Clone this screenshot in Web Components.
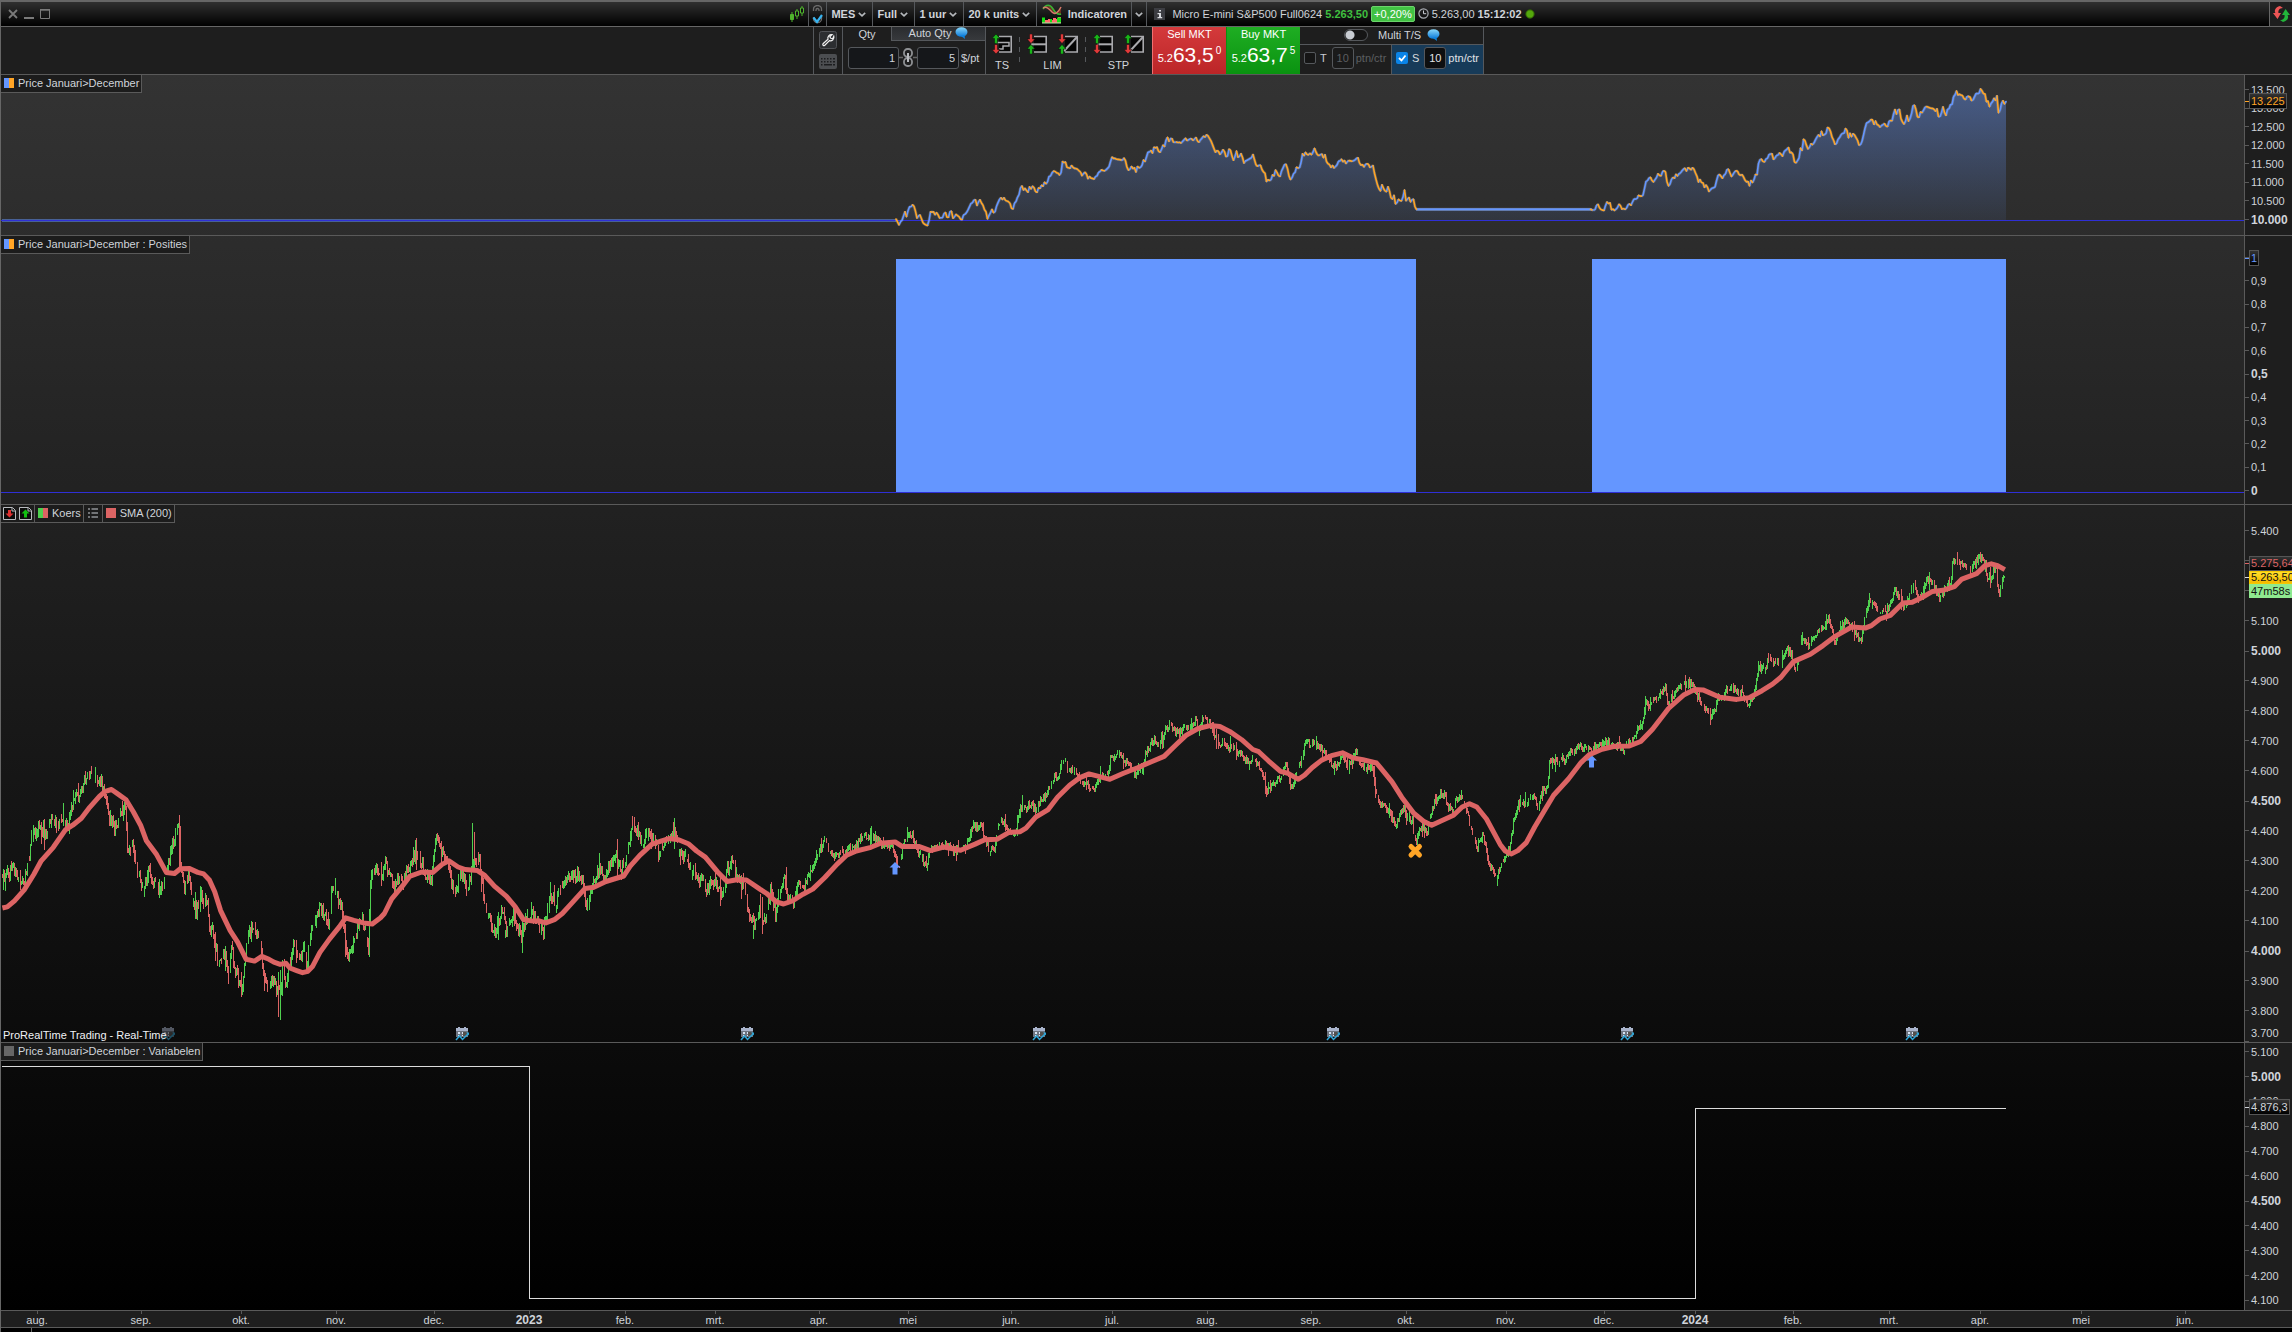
<!DOCTYPE html>
<html lang="nl">
<head>
<meta charset="utf-8">
<title>Micro E-mini S&amp;P500 Full0624</title>
<style>
html,body{height:100%;margin:0;background:#000}
body{font:11px/14px "Liberation Sans",Arial,sans-serif;color:#d0d4da}
</style>
</head>
<body>
<trading-window></trading-window>
<script>
const BASE = `*{box-sizing:border-box}svg{display:block;flex:none}button,input,select{font:inherit;color:inherit;margin:0;padding:0;border:0;background:none;border-radius:0;outline:0}`;
function define(name, render, ready){
  customElements.define(name, class extends HTMLElement{
    connectedCallback(){
      if(this.shadowRoot) return;
      const root = this.attachShadow({mode:'open'});
      root.innerHTML = '<style>'+BASE+'</style>' + render(this);
      if(ready) ready(root, this);
    }
  });
}

/* ---------- icons ---------- */
const up = (x,y,c)=>`<path d="M${x+4} ${y}l4 4.5h-2.5v5h-3v-5h-2.5z" fill="${c}" stroke="#0b0b0b" stroke-width=".5"/>`;
const down = (x,y,c)=>`<path d="M${x+4} ${y+9.5}l4-4.5h-2.5v-5h-3v5h-2.5z" fill="${c}" stroke="#0b0b0b" stroke-width=".5"/>`;
const G='#19b519', R='#e23a3a';
const frame='<path d="M7 2.5h12.2v15.500h-12.2" fill="#050505" stroke="#a9a9ad" stroke-width="1.6"/>';
const ICONS = {
  close:[10,10,'<path d="M1 1l8 8M9 1l-8 8" stroke="#7a7a7a" stroke-width="1.8"/>'],
  min:[10,10,'<path d="M0 9h10" stroke="#7a7a7a" stroke-width="2"/>'],
  max:[10,10,'<path d="M.5 1h9v8.500h-9z" fill="none" stroke="#7a7a7a" stroke-width="1"/><path d="M0 .7h10" stroke="#7a7a7a" stroke-width="1.4"/>'],
  candles:[14,16,'<g stroke="#4fb52c" stroke-width="1"><path d="M2 6v10M7 3v10M12 0v10"/><path d="M.5 8.500h3v5h-3z" fill="#4fb52c"/><path d="M5.500 5h3v5h-3zM10.500 2h3v5h-3z" fill="#111"/></g>'],
  linkcheck:[11,19,'<path d="M1.500 6V4a4 3.500 0 0 1 8 0v2M4 6V5a1.500 1.500 0 0 1 3 0v1M1.500 12v2a4 3.500 0 0 0 8 0v-2" fill="none" stroke="#6b6b6b" stroke-width="1.3"/><path d="M1.500 12.500l3.500 4.500 5-7" fill="none" stroke="#38b4f0" stroke-width="2.200"/>'],
  chev:[8,5,'<path d="M.8 .8l3.200 3 3.200-3" fill="none" stroke="#b5b8bc" stroke-width="1.600"/>'],
  indi:[20,20,'<path d="M1 6C5-1 9 0 12 5S17 12 19 10L19 3C15 10 13 10 9 6S4 2 1 6z" fill="#6d3020"/><path d="M1 5C4 0 8 0 11 5s5 6 8 5" fill="none" stroke="#35b535" stroke-width="1.500"/><path d="M1 4c4-2 6 1 9 4s6 1 9-5" fill="none" stroke="#d87a6a" stroke-width="1.500"/><path d="M0 14h3v2h3v-1h2v1h3v-2h3v1h2v-2h3v6H0z" fill="#ff6d6d"/><path d="M0 13.500h3v5H0zM8 15h2v3.500H8zM15 13.500h4v5h-4z" fill="#16e016"/><path d="M0 19h19" stroke="#9ff09f"/>'],
  info:[11,12,'<path d="M0 0h11v12H0z" fill="#3c3d42"/><path d="M5 2h2v1.600H5zM3.500 5H7v4h1.200v1.200H3.500V9H5V6.200H3.500z" fill="#d8dade"/>'],
  clock:[11,11,'<circle cx="5.500" cy="5.500" r="4.600" fill="none" stroke="#a9acb1" stroke-width="1.200"/><path d="M5.500 2.500v3.200H8.200" fill="none" stroke="#c8ccd2" stroke-width="1"/>'],
  dot:[10,10,'<circle cx="5" cy="5" r="4.200" fill="#55a80c" stroke="#2c5a06"/>'],
  swap:[19,18,'<path d="M8 1C3 2 2 6 3.500 8H1l4.500 6L9 8H6.500C6 6 7 3 11 3z" fill="#ee5555"/><path d="M11 17c5-1 6-5 4.500-7H18l-4.500-6L10 10h2.500c.5 2-.5 5-4.500 5z" fill="#22b43a"/>'],
  wrench:[18,18,'<rect x=".5" y=".5" width="17" height="17" rx="2" fill="#2c2e31" stroke="#515357"/><path d="M4 12.800l5-4.600A3.600 3.600 0 0 1 13 3.600L10.800 5.800l1 1.500 2 .2 1-2.200a3.600 3.600 0 0 1-4.400 4.400L5.600 14.500a1.200 1.200 0 0 1-1.600-1.700z" fill="none" stroke="#f2f2f2" stroke-width="1.200"/>'],
  keyb:[18,15,'<rect width="18" height="15" rx="2" fill="#4c4e51"/><path d="M2 4h1.500v1.500H2zM5 4h1.500v1.500H5zM8 4h1.500v1.500H8zM11 4h1.500v1.500H11zM14 4h2v1.500h-2zM2 7h1.500v1.500H2zM5 7h1.500v1.500H5zM8 7h1.500v1.500H8zM11 7h1.500v1.500H11zM14 7h2v1.500h-2zM2 10h1.500v1.500H2zM5 10h8v1.500H5zM14 10h2v1.500h-2z" fill="#1c1d1f"/>'],
  bubble:[13,12,'<defs><linearGradient id="b" x2="0" y2="1"><stop offset="0" stop-color="#8ad8fa"/><stop offset="1" stop-color="#0878d8"/></linearGradient></defs><ellipse cx="6.500" cy="5" rx="6" ry="4.800" fill="url(#b)"/><path d="M6 9l4 3-.5-4z" fill="#0c82dc"/>'],
  chain:[18,19,'<path d="M0 9.500h4M14 9.500h4" stroke="#666" stroke-width="1.500"/><g fill="none" stroke="#8e9093" stroke-width="1.800"><rect x="5" y="1" width="8" height="8" rx="3.500"/><rect x="5" y="10" width="8" height="8" rx="3.500"/></g><path d="M9 5v9" stroke="#b8babd" stroke-width="2"/>'],
  ts:[20,20,frame+'<path d="M4 8.500h13v3.500h-6v3H7" fill="none" stroke="#a9a9ad" stroke-width="1.500"/>'+up(0,0,G)+down(0,10.5,R)],
  lim1:[20,20,frame+'<path d="M4 10.300h15" stroke="#a9a9ad" stroke-width="2"/>'+down(0,0,R)+up(0,10.5,G)],
  lim2:[20,20,frame+'<path d="M6 17L19 3" stroke="#a9a9ad" stroke-width="2"/>'+down(0,0,R)+up(0,10.5,G)],
  stp1:[20,20,frame+'<path d="M4 10.300h15" stroke="#a9a9ad" stroke-width="2"/>'+up(0,0,G)+down(0,10.5,R)],
  stp2:[20,20,frame+'<path d="M6 17L19 3" stroke="#a9a9ad" stroke-width="2"/>'+up(0,0,G)+down(0,10.5,R)],
  sell:[13,13,'<path d="M.5.5h9l3 3v9H.5z" fill="#0c0c0c" stroke="#b9bcc0"/><path d="M9 1v3h3" fill="none" stroke="#b9bcc0"/><path d="M6.500 10.500l4-4H8V3H5v3.500H2.500z" fill="#e03030"/>'],
  buy:[13,13,'<path d="M.5.5h9l3 3v9H.5z" fill="#0c0c0c" stroke="#b9bcc0"/><path d="M9 1v3h3" fill="none" stroke="#b9bcc0"/><path d="M6.500 2.500l4 4H8v4H5v-4H2.500z" fill="#12c012"/>'],
  list:[10,10,'<path d="M0 1h2M0 5h2M0 9h2M3.500 1H10M3.500 5H10M3.500 9H10" stroke="#c8ccd2" stroke-width="1.200"/>']
};
const icon = n => { const [w,h,b]=ICONS[n]; return `<svg width="${w}" height="${h}" viewBox="0 0 ${w} ${h}" aria-hidden="true">${b}</svg>`; };

/* ---------- title bar ---------- */
define('menu-select', el=>`<style>
:host{display:block;border-right:1px solid #55585c;height:24px}
label{display:flex;align-items:center;height:100%;padding:0 6px 0 4px}
select{appearance:none;font-weight:bold;flex:1;height:20px;width:100%;min-width:0}
option{background:#222}
</style><label><select aria-label="${el.getAttribute('label')}"><option>${el.textContent}</option></select>${icon('chev')}</label>`);

define('title-bar', ()=>`<style>
:host{display:grid;grid-template-columns:1fr auto 1fr;height:27px;border-top:2px solid #666;border-bottom:1px solid #666;background:linear-gradient(#303030,#000)}
.win{display:flex;align-items:center;gap:6px;padding-left:7px}
.mid{display:flex;align-items:center;margin-left:28px}
.mid>button{height:24px;display:flex;align-items:center;justify-content:center;border-right:1px solid #55585c}
.ind{gap:6px;font-weight:bold;width:95px}
.info{display:flex;align-items:center;gap:3px;height:24px;padding:0 0 1px 7px;white-space:nowrap}
.info svg:first-child{margin-right:4px}
.g{color:#3fbf3f;font-weight:bold}
.b{background:#41c143;color:#fff;padding:0 2px;border-radius:2px;border:1px solid #6bd56b}
.end{justify-self:end;display:flex;align-items:center;border-left:1px solid #666;background:#1e1e1e;padding:0 1px 0 2px;height:24px}
</style>
<div class="win"><button aria-label="Sluiten">${icon('close')}</button><button aria-label="Minimaliseren">${icon('min')}</button><button aria-label="Maximaliseren">${icon('max')}</button></div>
<div class="mid">
<button style="width:23px" aria-label="Grafiektype">${icon('candles')}</button>
<button style="width:18px" aria-label="Koppelen">${icon('linkcheck')}</button>
<menu-select style="width:46px" label="Symbool">MES</menu-select>
<menu-select style="width:42px" label="Contract">Full</menu-select>
<menu-select style="width:49px" label="Tijdvenster">1 uur</menu-select>
<menu-select style="width:73px" label="Historie">20 k units</menu-select>
<button class="ind">${icon('indi')}Indicatoren</button>
<button style="width:15px" aria-label="Meer indicatoren">${icon('chev')}</button>
<div class="info">${icon('info')}<span>Micro E-mini S&amp;P500 Full0624</span><span class="g">5.263,50</span><span class="b">+0,20%</span>${icon('clock')}<span>5.263,00</span><b>15:12:02</b>${icon('dot')}</div>
</div>
<button class="end" aria-label="Vernieuwen">${icon('swap')}</button>`);

/* ---------- order bar ---------- */
define('price-button', el=>{
  const [label,a,b,c]=el.textContent.split('|');
  return `<style>
:host{display:block;width:74px}
button{display:flex;flex-direction:column;align-items:center;width:100%;height:47px;color:#fff;background:var(--fill);border-left:1px solid var(--edge)}
.p{display:flex;align-items:baseline;line-height:28px;height:30px}
.l{font-size:21px}sup{font-size:10px;line-height:10px;align-self:flex-start;margin:5px 0 0 2px}
</style><button><span>${label}</span><span class="p"><span>${a}</span><span class="l">${b}</span><sup>${c}</sup></span></button>`;});

define('tool-group', el=>`<style>
:host{display:flex;flex-direction:column;align-items:center;gap:4px;padding-top:7px;flex:none}
div{display:flex;gap:11px}
</style><div>${el.getAttribute('icons').split(' ').map(i=>`<button aria-label="${i}">${icon(i)}</button>`).join('')}</div><slot></slot>`);

define('stop-field', el=>{
  const on=el.hasAttribute('on');
  return `<style>
:host{display:flex;align-items:center;flex:1 1 0;min-width:0;gap:2px;padding:0 2px 3px 4px;height:29px;color:${on?'#d8dade':'#c8ccd2'};background:${on?'#173b59':'none'}}
label{display:flex;align-items:center;gap:4px}
.c{appearance:none;width:12px;height:12px;border:1px solid #55585c;border-radius:2px;background:#151515}
.c:checked{border:0;background:#0a84e8}
.w{display:grid}.w>*{grid-area:1/1}.w svg{pointer-events:none}
.n{width:22px;height:22px;border:1px solid #55585c;border-radius:3px;background:${on?'#0e0f10':'#1a1a1a'};text-align:center;margin-left:3px}
.n,.u{color:${on?'#e2e4e8':'#5c5e61'}}
</style><label><span class="w"><input class="c" type="checkbox" ${on?'checked':''}>${on?'<svg width="12" height="12"><path d="M3 6l2.500 2.500L9.500 3.500" fill="none" stroke="#fff" stroke-width="1.800"/></svg>':''}</span>${el.textContent}</label><input class="n" value="10" aria-label="${el.textContent} punten" ${on?'':'disabled'}><span class="u">ptn/ctr</span>`;});

define('order-bar', ()=>`<style>
:host{display:flex;justify-content:center;height:48px;background:#1e1e1e;border-bottom:1px solid #5a5a5a;padding-left:4px}
.side{display:flex;flex-direction:column;align-items:center;gap:5px;padding-top:4px;width:30px;border:1px solid #55585c;border-width:0 1px}
.qty{width:143px;border-right:1px solid #55585c}
.tabs{display:flex;height:14px}
.tabs button{display:flex;align-items:center;justify-content:center;gap:4px;height:14px;line-height:12px;padding-bottom:1px}
.tabs button:first-child{width:48px}
.tabs button:last-child{flex:1;background:linear-gradient(#2a2c2f,#37393c);border:1px solid #55585c;border-top:0;border-right:0}
.row{display:flex;align-items:center;padding:1px 0 0 5px;height:32px}
.row input{height:22px;border:1px solid #55585c;border-radius:3px;background:#15171a;text-align:right;padding-right:3px;min-width:0;flex:none}
.row span{margin-left:2px}
.tools{display:flex;width:166px;gap:7px;padding-left:6px}
.tools i{width:1px;margin:10px 0 12px;background:repeating-linear-gradient(#55585c 0 5px,transparent 5px 10px)}
.multi{width:184px;border-right:1px solid #55585c}
.top{display:flex;align-items:center;height:18px;border-bottom:1px solid #55585c;padding:0 0 1px 44px}
.sw{appearance:none;width:24px;height:12px;border:1px solid #55585c;border-radius:6px;background:radial-gradient(circle at 5px 5px,#c8ccd2 4px,#151515 5px);margin-right:10px}
.top label{display:flex;align-items:center;margin-right:6px}
.bot{display:flex}.bot stop-field:first-child{border-right:1px solid #55585c}
</style>
<div class="side"><button aria-label="Instellingen">${icon('wrench')}</button><button aria-label="Toetsenbord">${icon('keyb')}</button></div>
<div class="qty"><div class="tabs"><button>Qty</button><button>Auto Qty ${icon('bubble')}</button></div>
<div class="row"><input style="width:51px" value="1" aria-label="Qty">${icon('chain')}<input style="width:42px" value="5" aria-label="$/pt"><span>$/pt</span></div></div>
<div class="tools"><tool-group icons="ts">TS</tool-group><i></i><tool-group icons="lim1 lim2">LIM</tool-group><i></i><tool-group icons="stp1 stp2">STP</tool-group></div>
<price-button style="--fill:linear-gradient(#d43a3c,#bc2527);--edge:#f07070">Sell MKT|5.2|63,5|0</price-button>
<price-button style="--fill:linear-gradient(#1fae23,#0a9210);--edge:#0a9210">Buy MKT|5.2|63,7|5</price-button>
<div class="multi"><div class="top"><label><input class="sw" type="checkbox">Multi T/S</label>${icon('bubble')}</div>
<div class="bot"><stop-field>T</stop-field><stop-field on>S</stop-field></div></div>`);

/* ---------- charts ---------- */
const W = 2243;
define('chart-legend', ()=>`<style>
:host{display:flex;height:18px;background:#1c1c1c;border:1px solid #5a5a5a;border-width:0 1px 1px 0;font-size:11px;white-space:nowrap}
::slotted(*){display:flex}
</style><slot></slot>`);
define('legend-item', el=>{
  const c=el.getAttribute('colors'), ic=el.getAttribute('icons');
  return `<style>
:host{display:flex;align-items:center;gap:3px;padding:0 2px 0 3px}
:host([icons]){padding:0 2px 0 2px}
:host([icons=list]){padding:0 4px}
:host(:not(:last-child)){border-right:1px solid #5a5a5a}
button{display:flex;align-items:center;gap:4px;height:17px;padding-bottom:1px}
i{width:10px;height:10px;background:${c||'none'}}
</style>${ic?ic.split(' ').map(n=>`<button aria-label="${n}">${icon(n)}</button>`).join(''):`<button><i></i><slot></slot></button>`}`;});

define('price-axis', el=>{
  const rows=el.getAttribute('ticks').split(' ').map(t=>{
    const bold=t.startsWith('*'); return `<li class="${bold?'b':''}">${t.replace('*','').replace('_','')}</li>`;}).join('');
  const tail=el.getAttribute('tail');
  return `<style>
:host{display:flex;flex-direction:column;position:relative;background:#1e1e1e;border-left:1px solid #5a5a5a;overflow:hidden}
ul{list-style:none;margin:0;padding:${el.getAttribute('pad')};flex:1;display:flex;flex-direction:column;justify-content:space-between}
li{display:flex;height:14px;align-items:center;gap:2px;line-height:12px;padding-bottom:1px}
li::before{content:"";width:4px;height:1px;background:#5a5a5a}
.b{font-weight:bold;font-size:12px;line-height:14px;padding:0}
.tail{height:24px;padding:8px 0 0 6px;background:linear-gradient(#5a5a5a,#5a5a5a) 0 100%/4px 1px no-repeat}
</style><ul>${rows}</ul>${tail?`<div class="tail">${tail}</div>`:''}<slot></slot>`;});
define('axis-tag', el=>`<style>
:host{position:absolute;left:0;top:var(--y);display:flex;align-items:center}
:host::before{content:"";width:4px;height:1px;background:var(--tick,var(--ink))}
span{border:1px solid var(--line,#555);background:var(--fill,linear-gradient(#333,#000));color:var(--ink);height:var(--h,16px);line-height:calc(var(--h,16px) - 2px);padding:0 1px}
</style><span><slot></slot></span>`);

define('chart-panel', el=>`<style>
:host{display:grid;grid-template-columns:minmax(0,1fr) 48px;min-height:0;border-bottom:1px solid #5a5a5a}
.plot{display:grid;min-height:0;min-width:0}
.plot>*{grid-area:1/1}
.plot>svg{width:100%;height:100%}
.tl{justify-self:start;align-self:start}
.bl{justify-self:start;align-self:end;padding:0 0 0 2px;line-height:13px;color:#f0f2f5}
</style><div class="plot"><svg viewBox="1 ${el.getAttribute('top')} ${W} ${el.getAttribute('span')}" preserveAspectRatio="none"></svg><div class="bl"><slot name="note"></slot></div><div class="tl"><slot name="legend"></slot></div></div><slot name="axis"></slot>`,
(root,el)=>{ root.querySelector('svg').innerHTML = DRAW[el.getAttribute('kind')](); });

define('time-axis', el=>{
  const m='37 aug.|141 sep.|241 okt.|336 nov.|434 dec.|529 *2023|625 feb.|715 mrt.|819 apr.|908 mei|1011 jun.|1112 jul.|1207 aug.|1311 sep.|1406 okt.|1506 nov.|1604 dec.|1695 *2024|1793 feb.|1889 mrt.|1980 apr.|2081 mei|2185 jun.'.split('|').map(s=>s.split(' '));
  let out=`<i style="flex-grow:${m[0][0]-1}"></i>`;
  m.forEach(([x,t],i)=>{ const next=i<m.length-1?+m[i+1][0]:W+1; const b=t[0]=='*';
    out+=`<div style="flex-grow:${next-x}"><span class="${b?'b':''}">${t.replace('*','')}</span></div>`; });
  return `<style>
:host{display:flex;height:17px;background:#1e1e1e;border-bottom:1px solid #5a5a5a;padding-right:48px}
i,div{flex:0 1 0px;min-width:0}
div{display:flex;flex-direction:column;width:0}
span{width:60px;margin-left:-30px;text-align:center;line-height:13px;padding-top:3px;height:16px;background:linear-gradient(#5a5a5a,#5a5a5a) 50% 0/1px 3px no-repeat}
.b{font-weight:bold;font-size:12px}
</style>${out}`;});

/* each chunk: x origin, x scale, y origin, y scale, flat list of points */
const points = chunks => chunks.flatMap(([ox,sx,oy,sy,s])=>s.trim().split(/\s+/).map(p=>{const [x,y]=p.split(',').map(Number);return [ox+x/sx, oy+y/sy];}));
const SMA = points([
[0,2.063,490,2.751,`5,1150 15,1147 30,1130 50,1100 70,1057 85,1020 110,983 135,935 150,922 168,903 185,873 205,843 217,829 230,824 245,838 260,852 275,885 290,922 302,965 323,1003 343,1052 360,1055 372,1042 390,1041 408,1052 420,1056 432,1073 443,1105 455,1157 475,1212 490,1243 508,1291 525,1296 540,1283 555,1291 565,1299 578,1305 590,1302 598,1315 612,1322 624,1328 635,1324 645,1310 660,1272 680,1235 700,1202 713,1177 730,1184 750,1191 768,1194 785,1177 793,1165 808,1125 830,1090 845,1063 870,1051 893,1052 912,1030 926,1020 945,1037 960,1044 985,1047 1000,1060 1020,1090 1045,1118 1063,1147 1080,1182 1100,1186 1112,1185 1126,1191 1145,1181 1160,1165 1180,1136 1207,1096 1225,1093 1250,1077 1287,1062 1300,1035 1320,1005 1345,974 1365,965 1380,959 1400,962 1420,973 1437,993 1455,1010 1480,1050 1500,1077 1520,1072 1540,1073`],
[740,2.063,490,2.751,`41,1098 55,1110 75,1133 90,1139 108,1130 130,1112 150,1098 175,1066 200,1030 220,1005 240,993 270,983 290,972 320,968 335,981 370,981 393,992 420,982 455,991 485,974 505,962 530,961 555,942 578,940 590,930 610,900 635,880 655,845 680,812 700,792 720,781 740,788 763,796 790,780 820,764 850,747 875,733 900,700 920,675 945,656 970,648 990,651 1010,664 1035,687 1058,714 1070,720 1090,745 1115,774 1130,779 1152,796 1165,784 1180,764 1200,743 1220,731 1243,723 1265,737 1285,742 1313,751 1330,778 1345,803 1365,845 1390,889 1410,911 1427,922 1445,911 1472,895 1490,872 1505,863 1520,872 1540,905`],
[1400,2.376,490,2.751,`238,975 250,993 265,1001 280,992 300,970 320,927 345,878 365,840 400,795 430,750 450,728 480,713 510,705 545,704 572,692 600,658 638,601 675,563 700,549 720,550 760,570 800,576 830,571 860,552 885,534 905,515 935,472 975,452 1005,428 1035,402 1073,377 1105,380 1120,373 1140,355 1165,345 1195,311 1217,309 1240,296 1265,279 1290,276 1317,266 1335,245 1370,230 1390,208 1405,203 1420,208 1437,219`]]);
const PRICE = points([
[0,2.063,490,2.751,`2,1075 10,1065 25,1035 35,1060 48,1085 58,1010 68,950 80,920 92,950 105,905 120,915 130,900 140,925 148,870 155,840 160,850 170,805 178,795 188,775 198,805 207,798 215,840 225,905 235,930 247,900 255,870 258,880 262,1005 272,980 282,1040 295,1095 307,1040 313,1090 320,1080 330,1115 338,1070 345,1035 355,975 369,915 371,1050 380,1085 388,1060 395,1115 405,1160 414,1110 420,1140 426,1120 431,1220 437,1210 445,1260 450,1310 462,1270 470,1345 477,1260 485,1320 497,1380 503,1320 510,1240 517,1210 525,1205 535,1240 541,1310 550,1360 560,1350 570,1370 578,1385 583,1290 588,1360 597,1300 605,1245 612,1270 620,1300 627,1250 633,1330 636,1240 642,1210 650,1180 660,1150 670,1170 678,1210 683,1110 695,1115 705,1160 712,1250 720,1280 730,1230 745,1180 760,1240 763,1080 775,1040 785,1060 793,1020 800,1050 812,1085 822,1060 830,1085 840,1040 853,1003 865,1010 875,1050 890,1080 896,965 905,970 915,995 925,1050 937,1105 947,1070 953,1060 963,1100 970,1060 977,1030 987,1000 993,1060 998,1130 1010,1180 1020,1220 1030,1175 1037,1140 1045,1210 1058,1160 1065,1190 1075,1225 1085,1170 1097,1170 1108,1180 1120,1215 1128,1150 1137,1115 1145,1140 1157,1085 1170,1055 1180,1060 1197,1055 1205,1120 1213,1140 1225,1070 1235,1040 1245,1060 1255,1030 1268,1000 1280,1040 1293,1010 1303,915 1312,930 1322,975 1335,935 1347,950 1358,1000 1368,970 1378,950 1392,945 1402,1005 1415,1000 1425,1045 1438,1075 1447,1060 1455,1100 1465,1075 1477,1090 1490,1120 1500,1045 1510,1020 1522,1080 1536,1080 1540,1140 1550,1180`],
[740,2.063,490,2.751,`28,1200 35,1185 40,1130 47,1200 55,1165 62,1100 72,1160 80,1110 90,1065 97,1120 103,1110 110,1140 118,1080 130,1100 140,1060 150,1035 160,1000 172,965 178,965 185,1000 195,1010 207,990 217,1000 230,975 240,975 248,955 262,950 275,955 285,965 295,975 312,980 320,1010 327,1035 335,985 345,945 355,945 365,990 375,1010 383,1035 392,985 405,980 425,975 440,990 465,985 470,960 480,920 490,930 497,920 505,960 513,995 525,985 533,915 545,910 555,940 565,950 572,910 580,860 590,870 600,865 610,880 620,850 632,835 642,800 650,785 655,795 663,745 670,740 675,765 690,770 700,800 715,810 730,825 742,785 758,780 765,730 785,730 797,750 805,765 817,785 828,760 840,710 855,685 865,695 875,665 885,640 895,660 905,665 915,655 925,645 935,645 940,630 945,670 953,635 965,630 972,650 980,685 988,705 996,690 1005,715 1012,700 1022,715 1033,725 1045,745 1060,735 1070,760 1078,790 1088,830 1098,805 1107,800 1115,785 1125,745 1132,800 1138,820 1147,775 1157,740 1163,705 1172,695 1182,695 1195,710 1207,720 1218,755 1230,760 1243,735 1255,760 1272,715 1280,755 1295,765 1303,755 1309,810 1317,860 1328,870 1340,885 1352,925 1362,890 1370,880 1378,905 1387,910 1393,970 1403,930 1410,930 1418,945 1421,900 1430,870 1440,840 1452,830 1460,870 1470,880 1478,845 1490,855 1500,890 1508,940 1520,980 1530,950 1535,960 1543,1020 1552,1045 1560,1060`],
[1400,2.376,490,2.751,`238,1030 248,1010 255,1000 262,960 270,905 280,860 292,865 305,850 320,845 327,880 335,825 350,820 354,750 362,745 372,750 383,735 392,745 400,715 412,718 422,705 440,710 455,715 470,705 480,705 493,685 503,705 515,700 530,715 540,695 552,680 562,660 577,635 581,575 592,590 605,575 618,555 630,540 635,595 645,570 655,550 670,540 680,528 695,535 705,565 720,595 738,620 747,610 752,570 765,570 778,540 790,545 800,550 815,565 827,590 840,560 850,490 865,490 877,465 890,475 905,465 917,435 928,450 937,490 943,485 948,430 957,415 970,425 985,405 992,385 1005,375 1018,350 1028,395 1033,425 1043,390 1057,355 1067,370 1080,390 1095,415 1103,350 1113,305 1125,320 1140,330 1155,330 1163,310 1175,275 1187,290 1195,320 1207,300 1220,255 1230,295 1240,290 1247,250 1262,250 1272,270 1280,295 1295,270 1308,250 1312,195 1320,190 1335,205 1345,220 1355,220 1368,195 1380,180 1390,210 1396,245 1406,235 1415,200 1420,285 1427,270 1430,235 1436,230`]]);
const EQUITY = points([[880,1.375,70,3,`22,451 27,470 33,428 37,438 42,405 48,412 50,447 54,432 60,460 64,473 70,428 78,435 86,440 88,424 92,444 98,427 102,447 106,430 113,446 118,430 122,415 129,390 134,404 139,393 145,425 149,445 154,425 158,430 163,388 172,388 181,412 186,405 194,350 200,355 203,362 210,350 214,367 221,345 230,338 234,316 241,303 248,315 251,272 258,290 265,292 270,303 278,316 280,303 287,322 291,317 295,331 300,308 308,303 314,295 318,265 335,266 342,300 347,290 351,303 356,290 363,275 367,252 374,243 379,233 384,243 390,230 395,210 399,204 406,225 410,216 413,226 418,212 426,206 430,215 435,193 438,225 442,198 447,208 451,195 455,212 461,240 464,240 467,252 472,235 475,262 481,240 486,265 490,243 492,270 497,240 500,272 505,275 513,255 517,285 522,285 529,310 533,338 540,318 547,297 548,315 552,310 558,273 562,318 565,330 570,303 576,292 581,255 585,246 592,252 597,241 603,252 612,260 618,285 622,294 626,283 635,265 641,280 648,278 657,255 660,288 671,285 673,298 678,288 682,325 687,360 690,348 695,370 698,353 703,387 707,382 710,402 714,385 717,390 721,365 723,390 727,375 728,400 733,385 736,418 978,418 981,423 988,402 991,420 996,415 1002,395 1007,418 1012,412 1019,402 1022,424 1028,405 1033,398 1040,383 1050,370 1053,330 1058,325 1062,338 1070,318 1080,303 1083,345 1090,325 1100,303 1110,295 1120,303 1124,330 1134,347 1143,362 1148,350 1152,318 1158,325 1167,297 1170,328 1175,308 1186,315 1195,342 1202,325 1207,303 1208,272 1216,272 1225,248 1228,265 1238,248 1240,258 1248,233 1255,250 1258,275 1263,270 1265,230 1268,240 1270,212 1276,235 1285,220 1290,195 1300,185 1306,172 1311,210 1314,236 1318,200 1328,178 1332,198 1338,192 1345,217 1351,220 1353,180 1358,152 1362,145 1370,163 1385,165 1392,145 1395,125 1402,125 1407,163 1412,135 1415,150 1420,115 1424,105 1426,140 1432,130 1440,105 1447,108 1450,125 1454,118 1456,147 1461,112 1466,132 1470,110 1473,105 1477,72 1480,66 1487,78 1492,90 1497,78 1503,92 1508,70 1515,58 1520,80 1525,107 1530,90 1536,80 1538,130 1544,92 1549,102`]]);

function rng(seed){ return ()=>{ seed=(seed*1664525+1013904223)>>>0; return seed/4294967296; }; }
function at(series,x,k){ while(k.i<series.length-2 && series[k.i+1][0]<x) k.i++; const [a,b]=[series[k.i],series[k.i+1]]; const t=Math.max(0,Math.min(1,(x-a[0])/(b[0]-a[0]||1))); return a[1]+(b[1]-a[1])*t; }

const DRAW = {
  equity(){
    const r=rng(11), k={i:0}, pts=[];
    for(let x=896;x<=2006;x+=1.5){ const flat=x>1415.5&&x<1591.5; pts.push([x, at(EQUITY,x,k)+(flat?0:(r()-.5)*5)]); }
    let blue='', orange='';
    for(let i=1;i<pts.length;i++){ const a=pts[i-1], b=pts[i]; const seg=`M${a[0].toFixed(1)} ${a[1].toFixed(1)}L${b[0].toFixed(1)} ${b[1].toFixed(1)}`; if(b[1]>a[1]+.1) orange+=seg; else blue+=seg; }
    return `<defs><linearGradient id="a" gradientUnits="userSpaceOnUse" x1="0" y1="88" x2="0" y2="220"><stop offset="0" stop-color="#6496ff" stop-opacity=".42"/><stop offset="1" stop-color="#6496ff" stop-opacity=".08"/></linearGradient></defs>
    <path d="M896 220L${pts.map(p=>p.map(v=>v.toFixed(1)).join(' ')).join('L')}L2006 220z" fill="url(#a)"/>
    <path d="M2 220.500H896M1416 209.500H1592" stroke="#6496ff" stroke-opacity=".5" stroke-width="3"/>
    <path d="M1 220.500H2244" stroke="#2f2fd6"/>
    <path d="${blue}${orange}" stroke="#fff" stroke-opacity=".18" stroke-width="3"/>
    <path d="${blue}" stroke="#6496ff" stroke-width="1.600" stroke-linecap="round"/><path d="${orange}" stroke="#ffa526" stroke-width="1.600" stroke-linecap="round"/>`;
  },
  positions(){
    return `<path d="M1 492.500H2244" stroke="#2f2fd6"/><path d="M896 259h520v233h-520zM1592 259h414v233h-414z" fill="#6496ff"/>`;
  },
  price(){
    const r=rng(7), k={i:0}; let up='', down='', prev=null;
    for(let x=2;x<2005;x++){
      const wild=x<780, amp=wild?7:4;
      const y=at(PRICE,x,k)+(r()-.5)*amp*1.600;
      if(prev===null) prev=y;
      const tail=r()<.15?amp*1.300:0;
      const top=Math.min(y,prev)-r()*amp*.7-(r()<.5?tail:0), bot=Math.max(y,prev)+r()*amp*.7+(r()<.5?tail:0);
      const seg=`M${x+.5} ${Math.round(top)}V${Math.round(bot)+1}`;
      if(r()>.12){ if(y<prev) up+=seg; else down+=seg; }
      prev=y;
    }
    down+='M179.500 815V869M278.500 980V1017M91.500 766V774M474.500 832V861M632.500 816V826M786.500 867V890';
    up+='M280.500 970V1020M472.500 823V869M505.500 930V938M753.500 925V939M241.500 972V986';
    const cal=(x,o)=>`<g transform="translate(${x-6} 1027)" opacity="${o}"><path d="M0 1h2V0h2v1h4V0h2v1h2v9H0z" fill="#6d7480"/><path d="M0 1h2V0h2v1h4V0h2v1h2v3H0z" fill="#a9b4cc"/><path d="M2 5h2v2H2zM6 5h1v2H6zM9 5h1v2H9zM2 8h2v1H2zM6 8h1v1H6z" fill="#d7e4f4"/><path d="M7 5h4v4H7z" fill="#55504c"/><path d="M0 13l3.500-4 3 3.500L12 7" fill="none" stroke="#2fa6d8" stroke-width="1.500"/><path d="M10 5.500h3v3z" fill="#2fa6d8"/></g>`;
    const arrow=(x,y)=>`<path d="M${x} ${y}l5.500 5.500h-3v7h-5v-7h-3z" fill="#6496ff"/>`;
    return `<g shape-rendering="crispEdges" fill="none"><path d="${up}" stroke="#4fd04f"/><path d="${down}" stroke="#dc6464"/></g>
    ${arrow(895,862)}${arrow(1591.5,755)}
    <path d="M${SMA.map(p=>p.map(v=>v.toFixed(1)).join(' ')).join('L')}" fill="none" stroke="#dc6464" stroke-width="5" stroke-linejoin="round"/>
    <path d="M1411 846.500l8.500 8.500M1419.500 846.500l-8.500 8.500" stroke="#ffa526" stroke-width="5" stroke-linecap="round"/>
    ${cal(168,.45)}${[462,747,1039,1333,1627,1912].map(x=>cal(x,1)).join('')}`;
  },
  variables(){
    return `<path d="M2 1066.500H529.500V1298.500H1695.500V1108.500H2006" fill="none" stroke="#dcdcdc" shape-rendering="crispEdges"/>`;
  }
};

/* ---------- window ---------- */
define('trading-window', ()=>`<style>
:host{display:flex;flex-direction:column;min-height:100vh;height:100vh;border-left:1px solid #666}
title-bar,order-bar,time-axis,footer{flex:none}
main{flex:1;min-height:0;display:grid;grid-template-rows:161fr 269fr 538fr 268fr;background:linear-gradient(#333,#000)}
footer{height:4px;background:#000;padding-left:30px}
footer i{display:block;width:1px;height:4px;background:#666}
</style>
<title-bar></title-bar>
<order-bar></order-bar>
<main>
<chart-panel kind="equity" top="75" span="160">
  <chart-legend slot="legend"><legend-item colors="linear-gradient(90deg,#6496ff 50%,#ffa526 50%)">Price Januari&gt;December</legend-item></chart-legend>
  <price-axis slot="axis" pad="8px 0" ticks="13.500 13.000 12.500 12.000 11.500 11.000 10.500 *10.000"><axis-tag style="--y:18px;--ink:#ffa526">13.225</axis-tag></price-axis>
</chart-panel>
<chart-panel kind="positions" top="236" span="268">
  <chart-legend slot="legend"><legend-item colors="linear-gradient(90deg,#6496ff 50%,#ffa526 50%)">Price Januari&gt;December : Posities</legend-item></chart-legend>
  <price-axis slot="axis" pad="15px 0 6px" ticks="_ 0,9 0,8 0,7 0,6 *0,5 0,4 0,3 0,2 0,1 *0"><axis-tag style="--y:14px;--ink:#6496ff">1</axis-tag></price-axis>
</chart-panel>
<chart-panel kind="price" top="505" span="537">
  <chart-legend slot="legend"><legend-item icons="sell buy"></legend-item><legend-item colors="linear-gradient(90deg,#4fd04f 50%,#dc6464 50%)">Koers</legend-item><legend-item icons="list"></legend-item><legend-item colors="#dc6464">SMA (200)</legend-item></chart-legend>
  <span slot="note">ProRealTime Trading - Real-Time</span>
  <price-axis slot="axis" pad="19px 0 0" tail="3.700" ticks="5.400 _ _ 5.100 *5.000 4.900 4.800 4.700 4.600 *4.500 4.400 4.300 4.200 4.100 *4.000 3.900 3.800"><axis-tag style="--y:51px;--ink:#dc6464;--h:15px">5.275,64</axis-tag><axis-tag style="--y:66px;--ink:#111;--tick:#ddd;--fill:linear-gradient(#ffe02a,#f5b800);--line:#f5c800;--h:13px">5.263,50</axis-tag><axis-tag style="--y:79px;--ink:#111;--tick:transparent;--fill:#8fe98f;--line:#8fe98f;--h:14px">47m58s</axis-tag></price-axis>
</chart-panel>
<chart-panel kind="variables" top="1043" span="267">
  <chart-legend slot="legend"><legend-item colors="#666">Price Januari&gt;December : Variabelen</legend-item></chart-legend>
  <price-axis slot="axis" pad="2px 0" ticks="5.100 *5.000 4.900 4.800 4.700 4.600 *4.500 4.400 4.300 4.200 4.100"><axis-tag style="--y:56px;--ink:#d0d4da">4.876,3</axis-tag></price-axis>
</chart-panel>
</main>
<time-axis></time-axis>
<footer><i></i></footer>`);
</script>
</body>
</html>
